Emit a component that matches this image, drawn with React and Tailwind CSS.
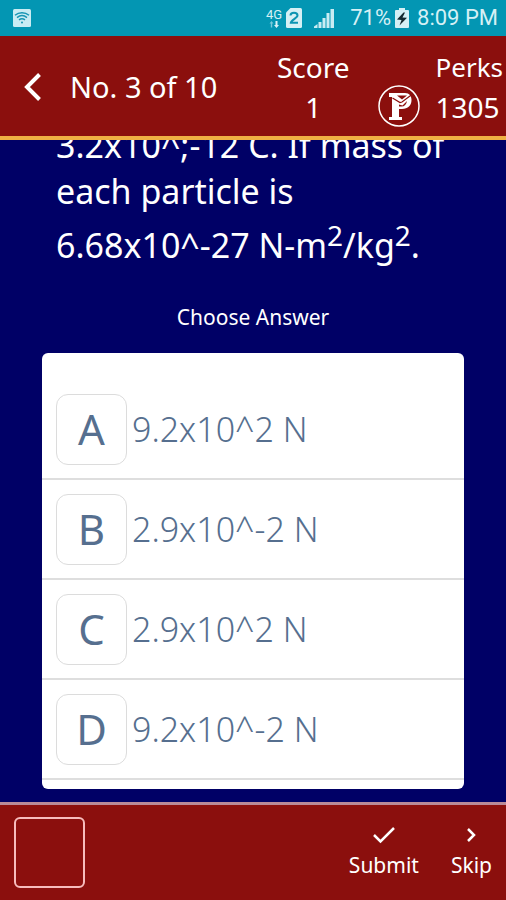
import { useState } from "react";

const answers = [
  { letter: "A", text: "9.2x10^2 N" },
  { letter: "B", text: "2.9x10^-2 N" },
  { letter: "C", text: "2.9x10^2 N" },
  { letter: "D", text: "9.2x10^-2 N" },
];

function WifiIcon() {
  return (
    <svg className="h-5 w-5" viewBox="0 0 20 20" fill="none" aria-hidden="true">
      <rect x="1" y="1" width="18" height="18" rx="1.5" fill="#c9ecf3" />
      <g stroke="#1795b3" strokeWidth="1.5">
        <path d="M3 7.2C7 3.8 13 3.8 17 7.2" />
        <path d="M5 9.6C8 7.2 12 7.2 15 9.6" />
        <path d="M7 11.8C9 10.3 11 10.3 13 11.8" />
      </g>
      <circle cx="10" cy="14.6" r="1" fill="#1795b3" />
    </svg>
  );
}

function DataArrows() {
  return (
    <svg className="h-[7px] w-[10px]" viewBox="0 0 10 7" aria-hidden="true">
      <path d="M2.5 0L4.5 2.5H3.2V6.500H1.8V2.500H.5Z" fill="#7cc9da" />
      <path d="M7.500 7L5 4H6.500V0H8.500V4H10Z" fill="#d9f2f7" />
    </svg>
  );
}

function SimIcon() {
  return (
    <svg className="h-5 w-4" viewBox="0 0 16 20" aria-hidden="true">
      <path d="M4.500 0H14.500Q16 0 16 1.500V18.500Q16 20 14.500 20H1.500Q0 20 0 18.500V4.500Z" fill="#d5f0f5" />
      <path d="M4.500 7.500C4.500 3.800 11.500 3.800 11.500 7.500C11.500 9.700 5 12.500 4.800 14.800H12" fill="none" stroke="#0c94b2" strokeWidth="2" />
    </svg>
  );
}

function SignalIcon() {
  return (
    <svg className="h-5 w-5" viewBox="0 0 20 20" fill="#c9ecf3" aria-hidden="true">
      <path d="M0 20V18.500L3.500 16V20Z" />
      <rect x="4.500" y="14" width="3" height="6" />
      <rect x="8.500" y="10" width="3" height="10" />
      <rect x="12.500" y="5" width="3" height="15" />
      <rect x="16.500" y="1" width="3.500" height="19" />
    </svg>
  );
}

function BatteryIcon() {
  return (
    <svg className="h-5 w-[14px]" viewBox="0 0 14 20" aria-hidden="true">
      <path d="M4 0H10V2H13Q14 2 14 3V19Q14 20 13 20H1Q0 20 0 19V3Q0 2 1 2H4Z" fill="#d5f0f5" />
      <path d="M8.500 4.500L2 11.500L6.500 12L4.500 17.500L12 9.800L7.500 9.500L10 4.500Z" fill="#152a30" />
    </svg>
  );
}

function PerkCoin() {
  return (
    <svg className="h-[42px] w-[42px]" viewBox="0 0 42 42" fill="none" aria-hidden="true">
      <circle cx="21" cy="21" r="20" stroke="#fff" strokeWidth="1.500" />
      <path d="M11 8H27C31.500 8 33.500 11 33.500 15C33.500 20.500 30 24 24 24H21V32H24V35H11V32H14V12H11Z" fill="#fff" />
      <path d="M21 19.500V21.500H23.500C26.500 21.500 28.500 19.500 29 16L24.500 20.500Z" fill="#8b0f0d" />
      <path d="M14.500 13L22 17.500L24 17L34 9.500" stroke="#8b0f0d" strokeWidth="1.200" />
      <path d="M19 10.500L24 14.500L29 10.500Z" fill="#8b0f0d" />
    </svg>
  );
}

function StatusBar() {
  return (
    <div className="flex h-9 shrink-0 items-center justify-between bg-[#0396b3] pr-2 pl-3 font-[Roboto,sans-serif] text-[22px] leading-6 text-[#d5f0f5]">
      <WifiIcon />
      <div className="flex items-center">
        <div className="mr-1 flex flex-col items-center">
          <span className="text-[13px] leading-3">4G</span>
          <DataArrows />
        </div>
        <SimIcon />
        <span className="mr-4 ml-3">
          <SignalIcon />
        </span>
        <span className="mr-1">71%</span>
        <BatteryIcon />
        <span className="ml-2">8:09 PM</span>
      </div>
    </div>
  );
}

export default function App() {
  const [choice, setChoice] = useState("");

  return (
    <div className="flex h-screen flex-col overflow-hidden bg-[#000066] font-['Noto_Sans',sans-serif] text-white">
      <StatusBar />

      <header className="flex h-26 shrink-0 items-center border-b-4 border-[#efb044] bg-[#8b0f0d] pt-px pr-[3px] pl-6 text-[28px] leading-10">
        <button type="button" aria-label="Back">
          <svg className="h-7 w-[18px]" viewBox="0 0 18 28" fill="none" stroke="#fff" strokeWidth="4" aria-hidden="true">
            <path d="M15.500 1.500L3 14L15.500 26.500" />
          </svg>
        </button>
        <h1 className="ml-7 text-[29px]">No. 3 of 10</h1>
        <div className="mr-7 ml-auto text-center">
          <p>Score</p>
          <p>1</p>
        </div>
        <div className="flex items-end gap-4">
          <PerkCoin />
          <div>
            <p className="text-[26px]">Perks</p>
            <p>1305</p>
          </div>
        </div>
      </header>

      <main className="flex min-h-0 flex-1 flex-col justify-end overflow-hidden px-[42px] pb-[13px]">
        <p className="shrink-0 pl-[14px] text-[34px] leading-[46px]">
          3.2x10^;-12 C. If mass of each particle is 6.68x10^-27 N-m
          <sup className="static align-super text-[28px] leading-[42px]">2</sup>/kg
          <sup className="static align-super text-[28px] leading-[42px]">2</sup>.
        </p>
        <h2 id="choose" className="mt-[33px] mb-5 shrink-0 text-center text-[21px] leading-8">
          Choose Answer
        </h2>
        <div role="radiogroup" aria-labelledby="choose" className="shrink-0 rounded-md bg-white pt-[27px] pb-[9px] text-[#566f8f]">
          {answers.map(({ letter, text }) => (
            <label key={letter} className="flex h-25 cursor-pointer items-center gap-[5px] border-b-2 border-[#dedede] pl-[14px]">
              <span className="grid place-items-center text-[42px] leading-none">
                <input
                  type="radio"
                  name="answer"
                  value={letter}
                  checked={choice === letter}
                  onChange={() => setChoice(letter)}
                  className="col-start-1 row-start-1 size-[71px] appearance-none rounded-xl border border-[#dcdcdc]"
                />
                <span className="col-start-1 row-start-1">{letter}</span>
              </span>
              <span className="text-[34px] leading-10 font-light">{text}</span>
            </label>
          ))}
        </div>
      </main>

      <footer className="flex h-[98px] shrink-0 items-center justify-between border-t-3 border-[#b98a99] bg-[#8b0f0d] px-[14px] text-[21px] leading-7">
        <output aria-label="Selected answer" className="grid size-[71px] place-items-center rounded-md border-2 border-[#f7bcbc] text-[42px]">
          {choice}
        </output>
        <div className="flex gap-8 pb-1">
          <button type="button" className="flex flex-col items-center gap-1">
            <svg className="h-6 w-6" viewBox="0 0 24 24" fill="none" stroke="#fff" strokeWidth="2.500" aria-hidden="true">
              <path d="M2 12L8.500 18.500L22 5" />
            </svg>
            Submit
          </button>
          <button type="button" className="flex flex-col items-center gap-1">
            <svg className="h-6 w-6" viewBox="0 0 24 24" fill="none" stroke="#fff" strokeWidth="2.500" aria-hidden="true">
              <path d="M9 6L15 12L9 18" />
            </svg>
            Skip
          </button>
        </div>
      </footer>
    </div>
  );
}
